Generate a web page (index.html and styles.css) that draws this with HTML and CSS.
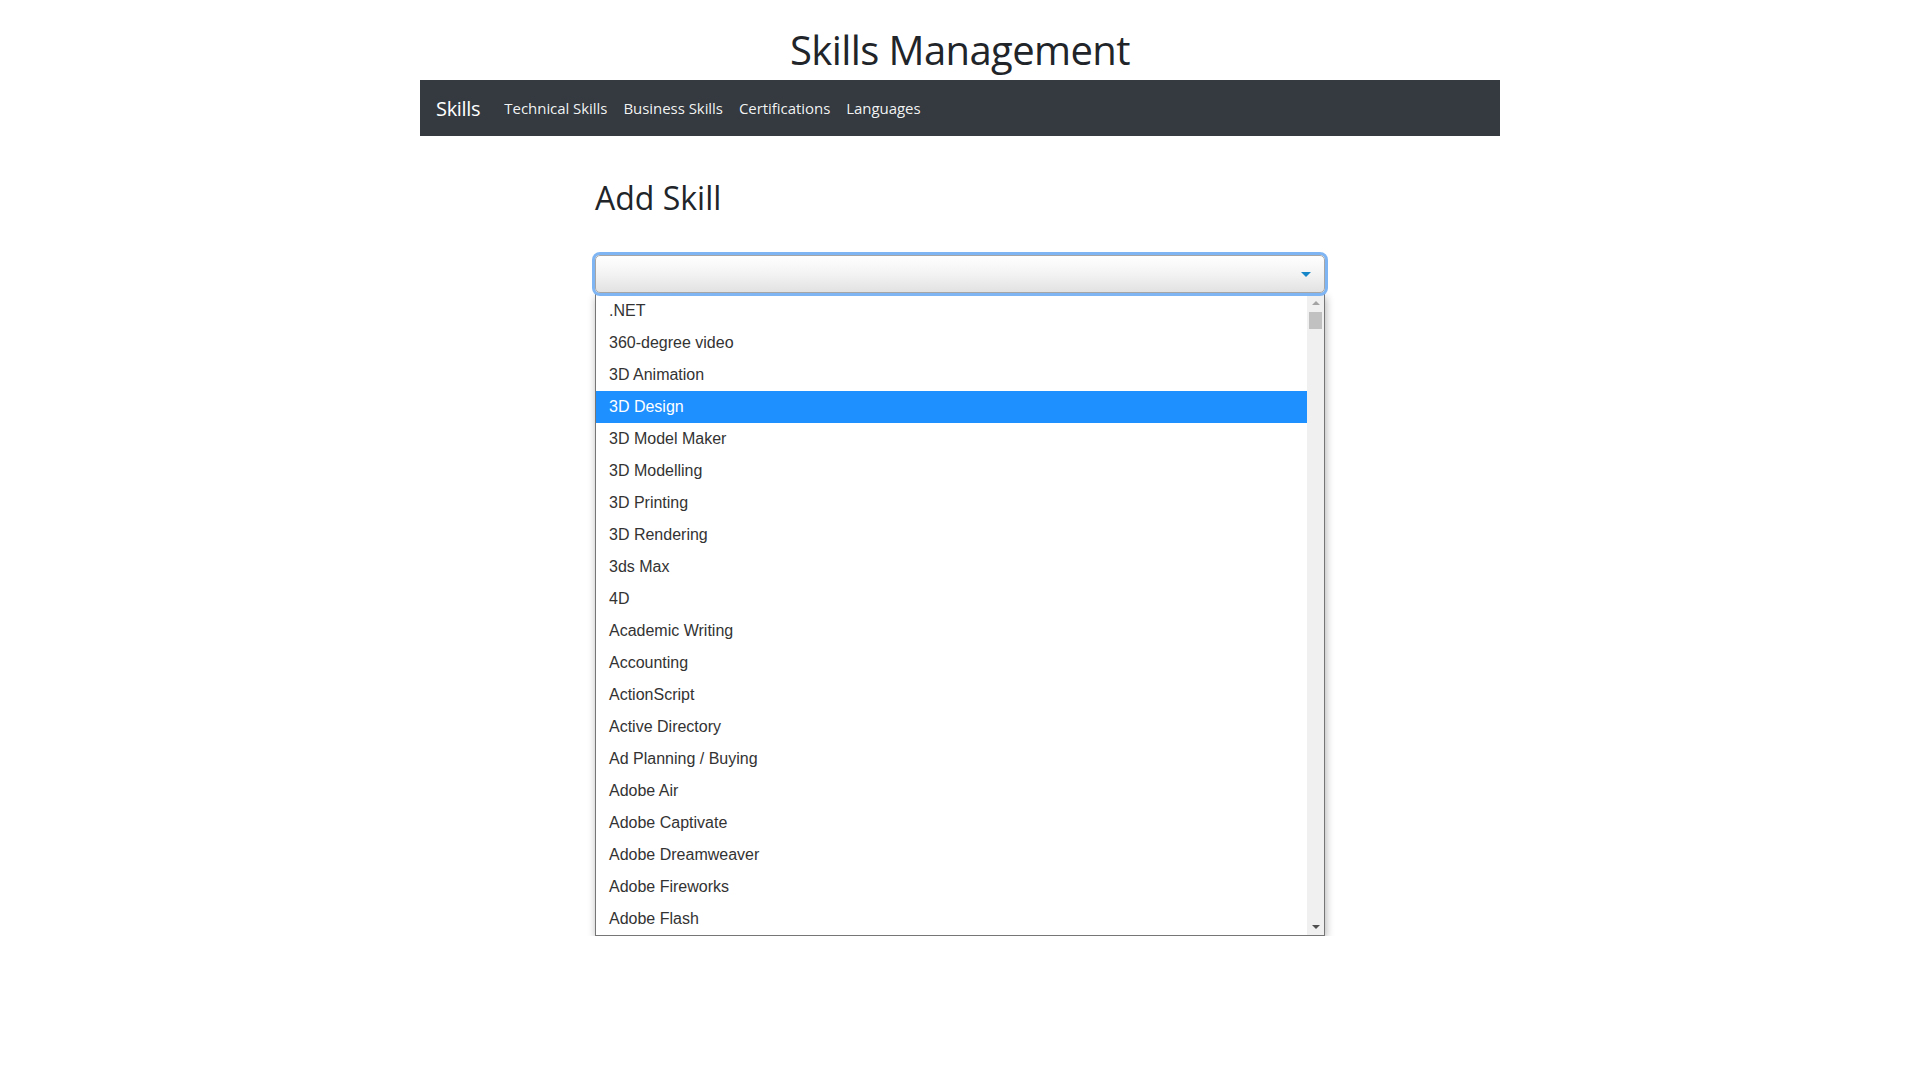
FILE: index.html
```html
<!DOCTYPE html>
<html lang="en">
<head>
<meta charset="utf-8">
<title>Skills Management</title>
<link rel="stylesheet" href="styles.css">
</head>
<body>
<header class="page-header">
  <h1 class="page-title">Skills Management</h1>
</header>
<nav class="navbar">
  <a class="brand" href="#">Skills</a>
  <ul class="nav-links">
    <li><a href="#">Technical Skills</a></li>
    <li><a href="#">Business Skills</a></li>
    <li><a href="#">Certifications</a></li>
    <li><a href="#">Languages</a></li>
  </ul>
</nav>
<main class="content">
  <h2 class="section-title">Add Skill</h2>
  <div class="picker">
    <div class="picker-box">
      <span class="picker-arrow"></span>
    </div>
    <div class="picker-list">
      <ul class="options">
        <li>.NET</li>
        <li>360-degree video</li>
        <li>3D Animation</li>
        <li class="active">3D Design</li>
        <li>3D Model Maker</li>
        <li>3D Modelling</li>
        <li>3D Printing</li>
        <li>3D Rendering</li>
        <li>3ds Max</li>
        <li>4D</li>
        <li>Academic Writing</li>
        <li>Accounting</li>
        <li>ActionScript</li>
        <li>Active Directory</li>
        <li>Ad Planning / Buying</li>
        <li>Adobe Air</li>
        <li>Adobe Captivate</li>
        <li>Adobe Dreamweaver</li>
        <li>Adobe Fireworks</li>
        <li>Adobe Flash</li>
      </ul>
      <div class="scrollbar">
        <span class="sb-up"></span>
        <span class="sb-thumb"></span>
        <span class="sb-track"></span>
        <span class="sb-down"></span>
      </div>
    </div>
  </div>
</main>
</body>
</html>
```
FILE: styles.css
```css
* { box-sizing: border-box; }
html, body { margin: 0; padding: 0; background: #fff; }
body {
  font-family: "Open Sans", "Noto Sans", sans-serif;
  color: #212529;
}
.page-header { text-align: center; padding-top: 26px; }
.page-title {
  margin: 0 0 6px;
  font-size: 40px;
  font-weight: 400;
  line-height: 48px;
  letter-spacing: -0.6px;
}
.navbar {
  width: 1080px;
  height: 56px;
  margin: 0 auto;
  background: #343a40;
  display: flex;
  align-items: center;
  padding: 0 16px;
}
.brand {
  color: #fff;
  text-decoration: none;
  font-size: 20px;
  letter-spacing: -0.3px;
  margin-right: 16px;
}
.nav-links { list-style: none; margin: 0; padding: 0; display: flex; }
.nav-links a {
  display: block;
  padding: 0 8px;
  color: rgba(255,255,255,0.95);
  text-decoration: none;
  font-size: 15px;
  letter-spacing: -0.05px;
}
.content { width: 730px; margin: 0 auto; padding-top: 43px; }
.section-title {
  margin: 0 0 38px;
  font-size: 32px;
  font-weight: 400;
  line-height: 38px;
  letter-spacing: 0;
}
.picker { display: flex; flex-direction: column; }
.picker-box {
  height: 38px;
  border: 1px solid #a6a6a6;
  border-radius: 5px;
  background: linear-gradient(#ffffff, #f3f3f3 50%, #e2e2e2);
  box-shadow: 0 0 0 3px #7fb5f3;
  position: relative;
}
.picker-arrow {
  position: absolute;
  right: 13px;
  top: 16px;
  width: 0; height: 0;
  border-left: 5px solid transparent;
  border-right: 5px solid transparent;
  border-top: 5px solid #1686c8;
}
.picker-list {
  margin-top: 1px;
  display: flex;
  border: 1px solid #767676;
  background: #fff;
  box-shadow: 1px 3px 8px rgba(0,0,0,0.3);
  font-family: "Liberation Sans", Arial, sans-serif;
  font-size: 16px;
  color: #333;
}
.options { list-style: none; margin: 0; padding: 0; flex: 1; }
.options li {
  height: 32px;
  line-height: 32px;
  padding-left: 13px;
  white-space: nowrap;
}
.options li.active { background: #1e90ff; color: #fff; }
.scrollbar {
  width: 17px;
  background: #f0f0f0;
  display: flex;
  flex-direction: column;
  align-items: center;
}
.sb-up {
  margin-top: 6px;
  width: 0; height: 0;
  border-left: 4px solid transparent;
  border-right: 4px solid transparent;
  border-bottom: 4px solid #a3a3a3;
}
.sb-thumb {
  margin-top: 7px;
  width: 13px;
  height: 17px;
  background: #c1c1c1;
}
.sb-track { flex: 1; }
.sb-down {
  margin-bottom: 6px;
  width: 0; height: 0;
  border-left: 4px solid transparent;
  border-right: 4px solid transparent;
  border-top: 4px solid #505050;
}
```
